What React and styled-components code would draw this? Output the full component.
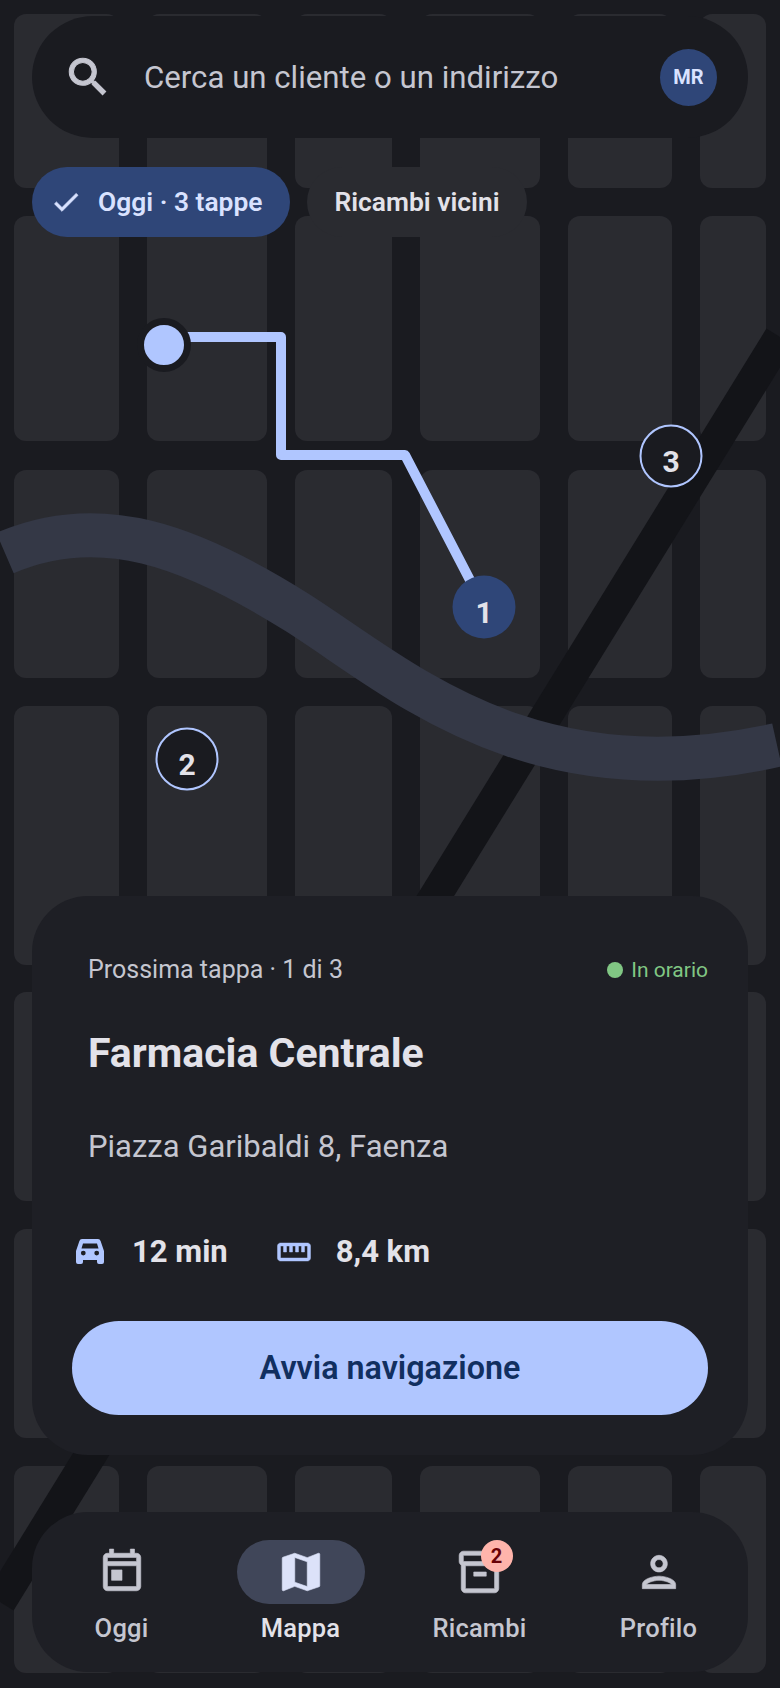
import React from 'react'
import styled, { createGlobalStyle } from 'styled-components'
import {
  MdSearch,
  MdCheck,
  MdOutlineStraighten,
  MdOutlineToday,
  MdMap,
  MdOutlineInventory2,
  MdOutlinePerson,
} from 'react-icons/md'

const COLUMNS = '14px 105px 28px 120px 28px 97px 28px 120px 28px 104px 28px 66px 14px'
const ROWS = '14px 174px 28px 225px 29px 208px 28px 259px 27px 209px 28px 209px 28px 207px 15px'

const PINS = [
  { n: 1, x: 484, y: 607, active: true },
  { n: 2, x: 187, y: 759 },
  { n: 3, x: 671, y: 456 },
]

const NAV = [
  { label: 'Oggi', Icon: MdOutlineToday },
  { label: 'Mappa', Icon: MdMap, active: true },
  { label: 'Ricambi', Icon: MdOutlineInventory2, badge: 2 },
  { label: 'Profilo', Icon: MdOutlinePerson },
]

// taller than the stock directions_car, so drawn by hand
function CarIcon() {
  return (
    <MetricGlyph width="28" height="25" viewBox="0 0 28 25" fill="#b0c6ff" fillRule="evenodd">
      <path d="M6 0H22Q24 0 24.6 2L28 12V23Q28 25 26 25H23Q21 25 21 23V21H7V23Q7 25 5 25H2Q0 25 0 23V12L3.4 2Q4 0 6 0ZM7 4.5L5.5 9.5H22.5L21 4.5ZM7.3 11.7A2.4 2.4 0 1 0 7.3 16.5A2.4 2.4 0 1 0 7.3 11.7ZM20.7 11.7A2.4 2.4 0 1 0 20.7 16.5A2.4 2.4 0 1 0 20.7 11.7Z" />
    </MetricGlyph>
  )
}

function MapLayer() {
  const cols = [1, 3, 5, 7, 9, 11]
  const rows = [1, 3, 5, 7, 9, 11, 13]
  return (
    <MapCanvas>
      <BlockGrid>
        {rows.flatMap((r) =>
          cols.map((c) => <Block key={r + '-' + c} $col={c + 1} $row={r + 1} />),
        )}
      </BlockGrid>
      <MapDrawing viewBox="0 0 780 1688" fill="none">
        <path d="M780 337 L0 1602" stroke="#131418" strokeWidth="32" />
        <path
          d="M5 553 C100 512 190 545 298 613 C400 678 530 800 777 745"
          stroke="#343846"
          strokeWidth="44"
        />
        <path
          d="M164 337 H281 V455 H405 L484 607"
          stroke="#b0c6ff"
          strokeWidth="10"
          strokeLinejoin="round"
        />
      </MapDrawing>
      <StartDot />
      {PINS.map((p) => (
        <Pin key={p.n} $active={p.active} style={{ left: p.x, top: p.y }}>
          {p.n}
        </Pin>
      ))}
    </MapCanvas>
  )
}

function App() {
  return (
    <Screen>
      <GlobalStyle />
      <MapLayer />
      <Content>
        <SearchBar>
          <MdSearch size={50} color="#c5c6d0" strokeWidth={0.5} />
          <SearchText>Cerca un cliente o un indirizzo</SearchText>
          <Avatar>MR</Avatar>
        </SearchBar>
        <Chips>
          <Chip $selected>
            <MdCheck size={32} strokeWidth={0.6} />
            Oggi · 3 tappe
          </Chip>
          <Chip>Ricambi vicini</Chip>
        </Chips>
        <Spacer />
        <Card>
          <CardTop>
            <Eyebrow>Prossima tappa · 1 di 3</Eyebrow>
            <Status>In orario</Status>
          </CardTop>
          <Title>Farmacia Centrale</Title>
          <Address>Piazza Garibaldi 8, Faenza</Address>
          <Metrics>
            <Metric>
              <CarIcon />
              12 min
            </Metric>
            <Metric>
              <MdOutlineStraighten size={36} color="#b0c6ff" strokeWidth={0.3} />
              8,4 km
            </Metric>
          </Metrics>
          <StartButton>Avvia navigazione</StartButton>
        </Card>
        <BottomNav>
          {NAV.map(({ label, Icon, active, badge }) => (
            <NavItem key={label} $active={active}>
              <NavIcon $active={active}>
                <Icon size={50} strokeWidth={0.3} />
                {badge && <Badge>{badge}</Badge>}
              </NavIcon>
              {label}
            </NavItem>
          ))}
        </BottomNav>
      </Content>
    </Screen>
  )
}
export default App

const GlobalStyle = createGlobalStyle`
  html, body {
    margin: 0;
    background: #1a1b20;
  }
  * {
    box-sizing: border-box;
  }
  /* the Md icons carry an invisible 24x24 box path, keep it unstroked */
  svg path[fill='none'] {
    stroke: none;
  }
`

const Screen = styled.div`
  position: relative;
  width: 780px;
  height: 1688px;
  overflow: hidden;
  background: #1a1b20;
  font-family: Roboto, "Liberation Sans", sans-serif;
  color: #e3e2e9;
`

const MapCanvas = styled.div`
  position: absolute;
  inset: 0;
`

const BlockGrid = styled.div`
  display: grid;
  width: 100%;
  height: 100%;
  grid-template-columns: ${COLUMNS};
  grid-template-rows: ${ROWS};
`

const Block = styled.div`
  grid-column: ${(p) => p.$col};
  grid-row: ${(p) => p.$row};
  background: #2a2b30;
  border-radius: 12px;
`

const MapDrawing = styled.svg`
  position: absolute;
  inset: 0;
  width: 780px;
  height: 1688px;
`

const StartDot = styled.div`
  position: absolute;
  left: 137px;
  top: 318px;
  width: 54px;
  height: 54px;
  border-radius: 50%;
  background: #b0c6ff;
  border: 7px solid #1a1b20;
`

const Pin = styled.div`
  position: absolute;
  width: 63px;
  height: 63px;
  transform: translate(-50%, -50%);
  display: flex;
  align-items: center;
  justify-content: center;
  padding-top: 9px;
  border-radius: 50%;
  font-size: 30px;
  font-weight: 700;
  color: #e3e2e9;
  background: ${(p) => (p.$active ? '#2f4678' : '#1a1b20')};
  border: ${(p) => (p.$active ? 'none' : '2px solid #b0c6ff')};
`

const Content = styled.div`
  position: relative;
  height: 100%;
  display: flex;
  flex-direction: column;
  padding: 16px 32px;
`

const SearchBar = styled.div`
  display: flex;
  align-items: center;
  height: 122px;
  padding: 0 31px;
  gap: 31px;
  background: #1a1b20;
  border-radius: 61px;
`

const SearchText = styled.div`
  flex: 1;
  font-size: 31.2px;
  color: #c5c6d0;
`

const Avatar = styled.div`
  width: 57px;
  height: 57px;
  border-radius: 50%;
  display: flex;
  align-items: center;
  justify-content: center;
  font-size: 20px;
  font-weight: 700;
  color: #d9e2ff;
  background: #2f4678;
`

const Chips = styled.div`
  display: flex;
  gap: 17px;
  margin-top: 29px;
`

const Chip = styled.div`
  display: flex;
  align-items: center;
  gap: 16px;
  height: 70px;
  padding: ${(p) => (p.$selected ? '0 28px 0 18px' : '0 27px')};
  border-radius: 35px;
  font-size: 26.4px;
  font-weight: 600;
  background: ${(p) => (p.$selected ? '#2f4678' : '#2a2b30')};
  color: ${(p) => (p.$selected ? '#d9e2ff' : '#e3e2e9')};
`

const Spacer = styled.div`
  flex: 1;
`

const Card = styled.div`
  display: flex;
  flex-direction: column;
  height: 559px;
  padding: 59px 40px 40px;
  background: #1e1f25;
  border-radius: 56px;
`

const CardTop = styled.div`
  display: flex;
  justify-content: space-between;
  align-items: center;
  padding-left: 16px;
`

const Eyebrow = styled.div`
  font-size: 25px;
  color: #c5c6d0;
`

const Status = styled.div`
  display: flex;
  align-items: center;
  gap: 8px;
  font-size: 21px;
  color: #81c784;
  &::before {
    content: '';
    width: 16px;
    height: 16px;
    border-radius: 50%;
    background: #81c784;
  }
`

const Title = styled.div`
  margin-top: 45px;
  padding-left: 16px;
  font-size: 41px;
  font-weight: 700;
`

const Address = styled.div`
  margin-top: 51px;
  padding-left: 16px;
  font-size: 31px;
  color: #c5c6d0;
`

const Metrics = styled.div`
  display: flex;
  gap: 48px;
  margin-top: 68px;
`

const Metric = styled.div`
  display: flex;
  align-items: center;
  gap: 24px;
  font-size: 31px;
  font-weight: 700;
`

const MetricGlyph = styled.svg`
  margin: 0 4px;
`

const StartButton = styled.button`
  margin-top: auto;
  height: 94px;
  border: 0;
  border-radius: 47px;
  background: #b0c6ff;
  color: #112f60;
  font-family: inherit;
  font-size: 32.3px;
  font-weight: 600;
`

const BottomNav = styled.div`
  display: grid;
  grid-template-columns: repeat(4, 1fr);
  height: 160px;
  margin-top: 57px;
  padding-top: 28px;
  background: #1e1f25;
  border-radius: 56px;
`

const NavItem = styled.div`
  display: flex;
  flex-direction: column;
  align-items: center;
  gap: 9px;
  font-size: 25.5px;
  font-weight: 500;
  letter-spacing: 0.2px;
  color: ${(p) => (p.$active ? '#e3e2e9' : '#c5c6d0')};
`

const NavIcon = styled.div`
  position: relative;
  display: flex;
  align-items: center;
  justify-content: center;
  width: 128px;
  height: 64px;
  border-radius: 32px;
  background: ${(p) => (p.$active ? '#404659' : 'transparent')};
  color: ${(p) => (p.$active ? '#dce2f9' : '#c5c6d0')};
`

const Badge = styled.div`
  position: absolute;
  left: 65px;
  top: 0;
  width: 32px;
  height: 32px;
  border-radius: 50%;
  display: flex;
  align-items: center;
  justify-content: center;
  font-size: 20px;
  font-weight: 700;
  letter-spacing: 0;
  color: #690005;
  background: #ffb4ab;
`
